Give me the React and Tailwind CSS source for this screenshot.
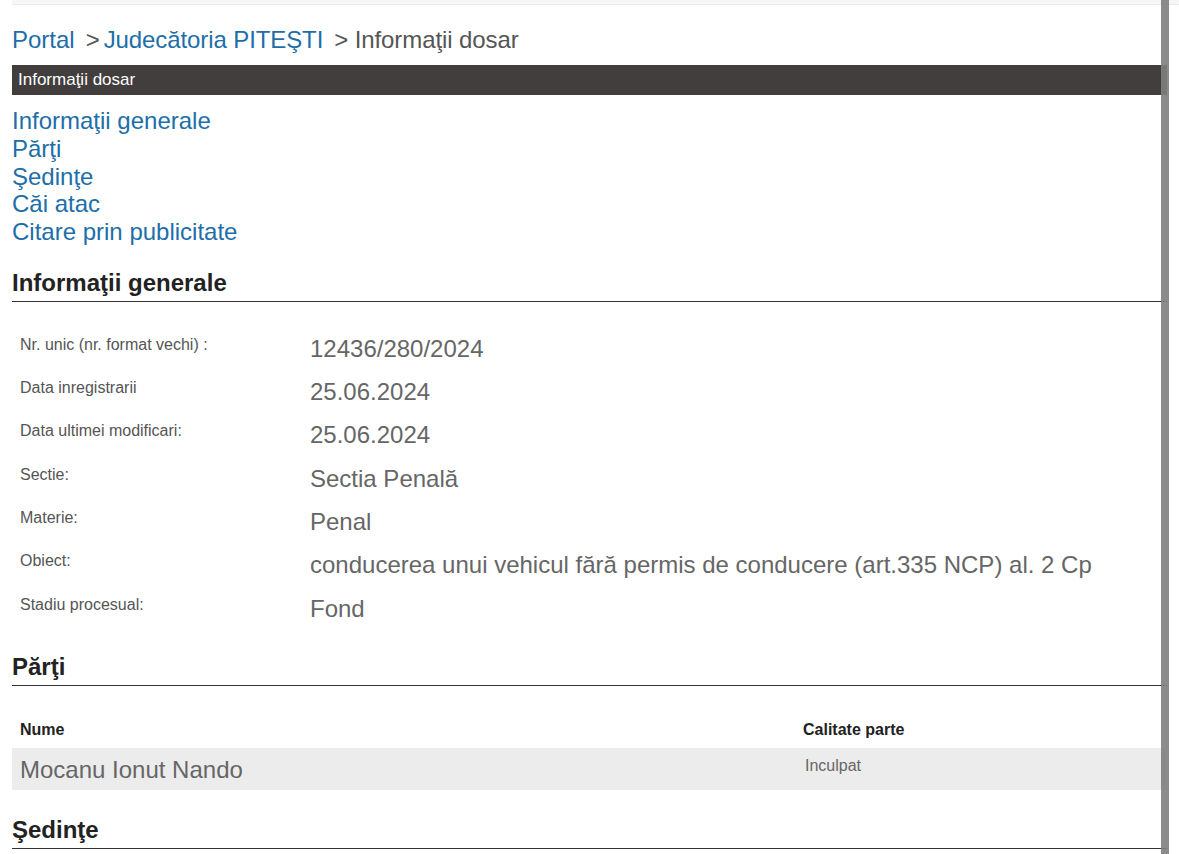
const links = [
  "Informaţii generale",
  "Părţi",
  "Şedinţe",
  "Căi atac",
  "Citare prin publicitate",
];

const info = [
  ["Nr. unic (nr. format vechi) :", "12436/280/2024"],
  ["Data inregistrarii", "25.06.2024"],
  ["Data ultimei modificari:", "25.06.2024"],
  ["Sectie:", "Sectia Penală"],
  ["Materie:", "Penal"],
  ["Obiect:", "conducerea unui vehicul fără permis de conducere (art.335 NCP) al. 2 Cp"],
  ["Stadiu procesual:", "Fond"],
];

function SectionTitle({ children, className = "" }) {
  return (
    <h2
      className={`text-[24px] leading-[28px] font-bold text-[#222] pb-[4px] border-b border-[#333] ${className}`}
    >
      {children}
    </h2>
  );
}

export default function App() {
  return (
    <div
      className="relative min-h-[854px] bg-white overflow-hidden"
      style={{ fontFamily: '"Liberation Sans", Arial, Helvetica, sans-serif' }}
    >
      {/* top strip */}
      <div className="ml-[12px] h-[5px] bg-[#f6f6f6] border-b border-[#ebebeb]" />

      <div className="ml-[12px] w-[1155px]">
        {/* breadcrumb */}
        <div className="mt-[21px] text-[24px] leading-[28px] text-[#555] flex items-center whitespace-nowrap">
          <a className="text-[#1d6ea9]">Portal</a>
          <span className="ml-[11px]">&gt;</span>
          <a className="ml-[4px] text-[#1d6ea9] tracking-[-0.1px]">Judecătoria PITEŞTI</a>
          <span className="ml-[11px] tracking-[-0.1px]">&gt; Informaţii dosar</span>
        </div>

        {/* dark title bar */}
        <div className="mt-[11px] h-[30px] bg-[#423e3e] text-white text-[17px] flex items-center px-[6px]">
          Informaţii dosar
        </div>

        {/* anchors */}
        <ul className="mt-[12px] text-[24px] leading-[27.75px] text-[#1d6ea9]">
          {links.map((l) => (
            <li key={l}>
              <a>{l}</a>
            </li>
          ))}
        </ul>

        {/* general info */}
        <SectionTitle className="mt-[23px]">Informaţii generale</SectionTitle>
        <div className="mt-[25px]">
          {info.map(([label, value]) => (
            <div key={label} className="h-[43.3px] flex items-start pl-[8px] pt-[8px]">
              <div className="w-[290px] text-[16px] leading-[18px] pt-[1px] text-[#555]">
                {label}
              </div>
              <div className="text-[24px] leading-[28px] text-[#666] whitespace-nowrap">
                {value}
              </div>
            </div>
          ))}
        </div>

        {/* parties */}
        <SectionTitle className="mt-[23px]">Părţi</SectionTitle>
        <div className="mt-[32px] flex h-[24px] items-center text-[16px] font-bold text-[#222]">
          <div className="pl-[8px] w-[791px]">Nume</div>
          <div>Calitate parte</div>
        </div>
        <div className="mt-[6px] h-[42px] bg-[#ececec] flex items-start pt-[8px]">
          <div className="pl-[8px] w-[793px] text-[24px] leading-[28px] text-[#666]">
            Mocanu Ionut Nando
          </div>
          <div className="text-[16px] leading-[18px] pt-[1px] text-[#666]">Inculpat</div>
        </div>

        {/* sessions */}
        <SectionTitle className="mt-[26px]">Şedinţe</SectionTitle>
      </div>

      {/* right page edge */}
      <div className="absolute top-0 bottom-0 left-[1161px] w-[8px] bg-[#7f7f7f]/90" />
    </div>
  );
}
